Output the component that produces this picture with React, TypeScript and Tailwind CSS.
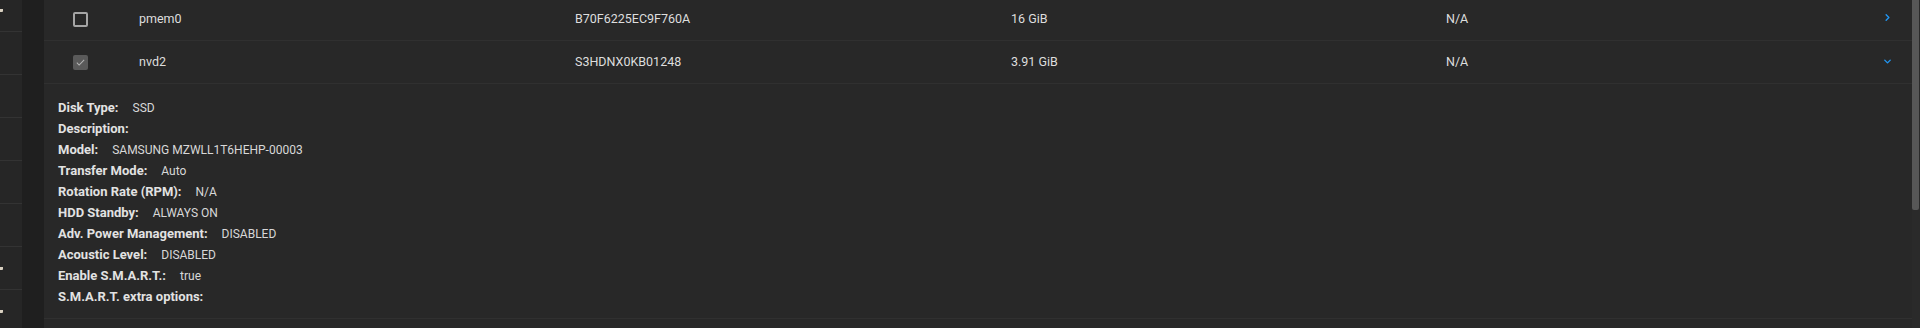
import { ChevronDown, ChevronRight } from "lucide-react";

const rows = [
  { name: "pmem0", serial: "B70F6225EC9F760A", size: "16 GiB", pool: "N/A", checked: false, open: false },
  { name: "nvd2", serial: "S3HDNX0KB01248", size: "3.91 GiB", pool: "N/A", checked: true, open: true },
];

const details: [string, string][] = [
  ["Disk Type:", "SSD"],
  ["Description:", ""],
  ["Model:", "SAMSUNG MZWLL1T6HEHP-00003"],
  ["Transfer Mode:", "Auto"],
  ["Rotation Rate (RPM):", "N/A"],
  ["HDD Standby:", "ALWAYS ON"],
  ["Adv. Power Management:", "DISABLED"],
  ["Acoustic Level:", "DISABLED"],
  ["Enable S.M.A.R.T.:", "true"],
  ["S.M.A.R.T. extra options:", ""],
];

// left nav rows: caret shown on some of them
const navRows = [true, false, false, false, false, false, true, true];

function Checkbox({ checked }: { checked: boolean }) {
  if (checked) {
    return (
      <div className="flex h-[15px] w-[15px] items-center justify-center rounded-[2px] bg-[#5a5a5a]">
        <svg width="11" height="11" viewBox="0 0 24 24" fill="none" stroke="#b5b5b5" strokeWidth="2.2">
          <path d="M4 12.5l5 5L20 6.5" />
        </svg>
      </div>
    );
  }
  return <div className="h-[15px] w-[15px] rounded-[2px] border-2 border-[#a5a5a5]" />;
}

export default function App() {
  return (
    <div
      className="flex h-[328px] w-[1920px] overflow-hidden bg-[#282828] text-[#dedede]"
      style={{ fontFamily: "Roboto, 'Liberation Sans', sans-serif" }}
    >
      {/* cut-off nav panel */}
      <div className="-mt-[11px] flex w-[22px] shrink-0 flex-col bg-[#262626]">
        {navRows.map((caret, i) => (
          <div key={i} className="flex h-[43px] shrink-0 items-center border-b border-[#333333]">
            {caret && <div className="h-[3px] w-[3px] rounded-br-[1px] bg-[#d8d0c0]" />}
          </div>
        ))}
      </div>
      <div className="w-[22px] shrink-0 bg-[#1f1f1f]" />

      {/* table */}
      <div className="-mt-[2px] flex min-w-0 flex-1 flex-col">
        {rows.map((r) => (
          <div key={r.name}>
            <div className="grid h-[43px] grid-cols-[95px_436px_436px_435px_1fr_40px] items-center border-b border-[#303030] text-[12.5px]">
              <div className="pl-[29px]">
                <Checkbox checked={r.checked} />
              </div>
              <div>{r.name}</div>
              <div>{r.serial}</div>
              <div>{r.size}</div>
              <div>{r.pool}</div>
              <div className="flex items-center pl-[10px] text-[#2196f3]">
                {r.open ? (
                  <ChevronDown size={11} strokeWidth={3} className="-mt-[1px]" />
                ) : (
                  <ChevronRight size={11} strokeWidth={3} className="-mt-[3px]" />
                )}
              </div>
            </div>
            {r.open && (
              <div className="border-b border-[#303030] pb-[11px] pl-[14px] pt-[13px]">
                {details.map(([k, v]) => (
                  <div key={k} className="flex h-[21px] items-center gap-[14px]">
                    <span className="text-[13px] font-bold text-[#e2e2e2]">{k}</span>
                    <span className="text-[12px] text-[#d8d8d8]">{v}</span>
                  </div>
                ))}
              </div>
            )}
          </div>
        ))}
      </div>

      {/* scrollbar */}
      <div className="flex w-[8px] shrink-0 flex-col bg-[#2a2a2a]">
        <div className="h-[210px] w-[7px] rounded-b-[2px] bg-[#575757]" />
      </div>
    </div>
  );
}
